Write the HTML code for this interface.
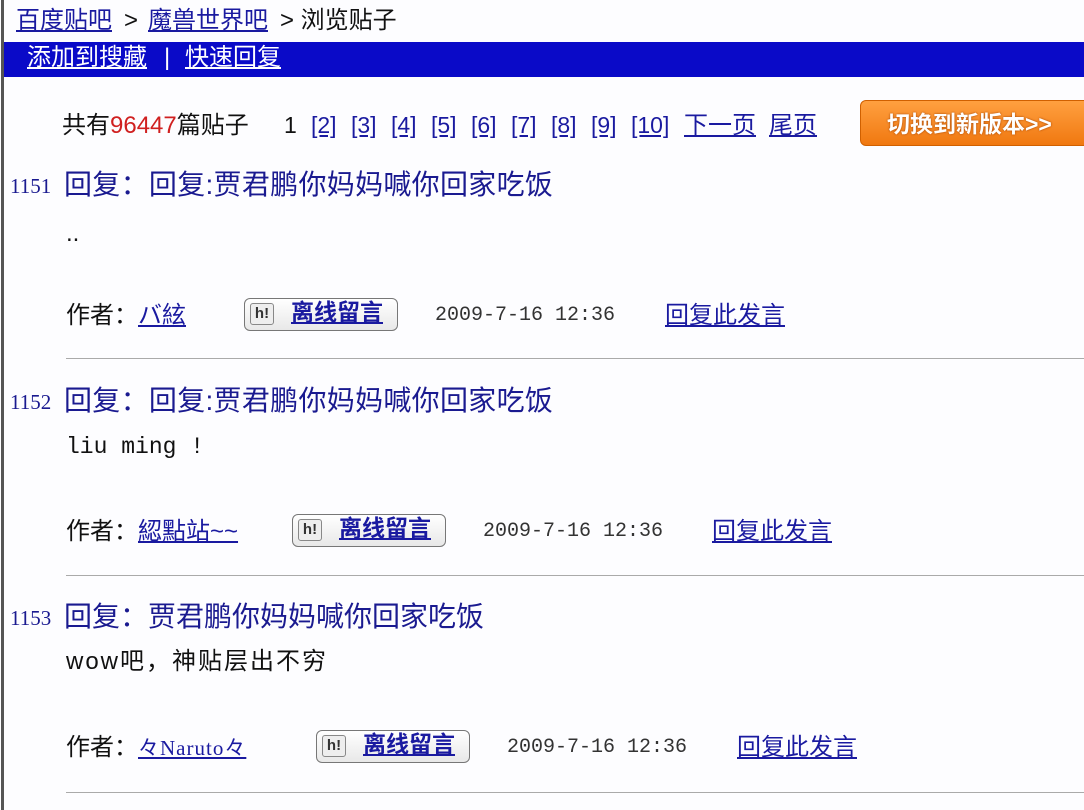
<!DOCTYPE html>
<html><head><meta charset="utf-8"><style>
body{margin:0;width:1084px;height:810px;background:#fdfdff;position:relative;overflow:hidden;font-family:"Liberation Sans","Noto Sans CJK SC",sans-serif;}
.a{position:absolute;white-space:nowrap;line-height:1;}
a,.l{color:#1a1aa0;text-decoration:underline;}
.bar{position:absolute;left:4px;top:42px;width:1080px;height:35px;background:#0a0ac8;}
.lb{position:absolute;left:1px;top:0;width:3px;height:810px;background:#555;}
.t{font-size:28px;color:#1a1a90;}
.n{font-family:"Liberation Serif",serif;font-size:21px;color:#1a1a90;}
.b{font-size:24px;color:#111;}
.d{font-family:"Liberation Mono",monospace;font-size:20px;color:#333;}
.btn{position:absolute;height:31px;width:152px;border:1px solid #777;border-radius:6px;background:linear-gradient(#fff,#e8e8e8);}
.btn .ic{position:absolute;left:5px;top:4px;width:22px;height:20px;border:1px solid #888;border-radius:3px;background:#eee;font:bold 15px "Liberation Sans",sans-serif;color:#333;text-align:center;line-height:20px}
.btn .tx{position:absolute;left:46px;top:2px;line-height:1;font-size:23px;color:#1a1aa0;text-decoration:underline;font-weight:bold}
.hr{position:absolute;left:66px;width:1018px;height:1px;background:#aaa;}
.new{position:absolute;left:860px;top:100px;width:230px;height:46px;border-radius:6px;background:linear-gradient(#ffa040,#f07810);border:1px solid #d06000;color:#fff;font-weight:bold;font-size:23px;line-height:46px;padding-left:26px;box-sizing:border-box;text-shadow:0 0 2px #a04000}
.p{position:absolute;top:114px;font-size:23px;line-height:1;white-space:nowrap}
</style></head><body>
<div class="lb"></div>
<div class="a" style="left:16px;top:9px;font-size:24px;"><a>百度贴吧</a></div>
<div class="a" style="left:124px;top:9px;font-size:24px;color:#111">&gt;</div>
<div class="a" style="left:148px;top:9px;font-size:24px;"><a>魔兽世界吧</a></div>
<div class="a" style="left:280px;top:9px;font-size:24px;color:#111">&gt; 浏览贴子</div>
<div class="bar"></div>
<div class="a" style="left:27px;top:46px;font-size:24px;color:#fff;text-decoration:underline">添加到搜藏</div>
<div class="a" style="left:164px;top:46px;font-size:24px;color:#fff">|</div>
<div class="a" style="left:185px;top:46px;font-size:24px;color:#fff;text-decoration:underline">快速回复</div>
<div class="p" style="left:62px;font-size:24px;color:#111">共有<span style="color:#d02020">96447</span>篇贴子</div>
<div class="p" style="left:284px;color:#111">1</div>
<div class="p" style="left:311px"><a>[2]</a></div>
<div class="p" style="left:351px"><a>[3]</a></div>
<div class="p" style="left:391px"><a>[4]</a></div>
<div class="p" style="left:431px"><a>[5]</a></div>
<div class="p" style="left:471px"><a>[6]</a></div>
<div class="p" style="left:511px"><a>[7]</a></div>
<div class="p" style="left:551px"><a>[8]</a></div>
<div class="p" style="left:591px"><a>[9]</a></div>
<div class="p" style="left:631px"><a>[10]</a></div>
<div class="p" style="left:684px;font-size:24px"><a>下一页</a></div>
<div class="p" style="left:769px;font-size:24px"><a>尾页</a></div>
<div class="new">切换到新版本&gt;&gt;</div>

<div class="a n" style="left:10px;top:176px">1151</div>
<div class="a t" style="left:64px;top:171px;letter-spacing:0.3px">回复：回复:贾君鹏你妈妈喊你回家吃饭</div>
<div class="a b" style="left:66px;top:222px">..</div>
<div class="a b" style="left:66px;top:304px">作者：<a>バ絃</a></div>
<div class="btn" style="left:244px;top:298px"><div class="ic">h!</div><div class="tx">离线留言</div></div>
<div class="a d" style="left:435px;top:306px">2009-7-16 12:36</div>
<div class="a b" style="left:665px;top:304px"><a>回复此发言</a></div>
<div class="hr" style="top:358px"></div>

<div class="a n" style="left:10px;top:392px">1152</div>
<div class="a t" style="left:64px;top:387px;letter-spacing:0.3px">回复：回复:贾君鹏你妈妈喊你回家吃饭</div>
<div class="a" style="left:66px;top:436px;font-family:'Liberation Mono',monospace;font-size:23px;color:#111">liu ming !</div>
<div class="a b" style="left:66px;top:520px">作者：<a>綛點站~~</a></div>
<div class="btn" style="left:292px;top:514px"><div class="ic">h!</div><div class="tx">离线留言</div></div>
<div class="a d" style="left:483px;top:522px">2009-7-16 12:36</div>
<div class="a b" style="left:712px;top:520px"><a>回复此发言</a></div>
<div class="hr" style="top:575px"></div>

<div class="a n" style="left:10px;top:608px">1153</div>
<div class="a t" style="left:64px;top:603px">回复：贾君鹏你妈妈喊你回家吃饭</div>
<div class="a b" style="left:66px;top:650px;letter-spacing:2px">wow吧，神贴层出不穷</div>
<div class="a b" style="left:66px;top:736px">作者：<a style="font-family:'Liberation Serif',serif;font-size:21px;letter-spacing:1px">々Naruto々</a></div>
<div class="btn" style="left:316px;top:730px"><div class="ic">h!</div><div class="tx">离线留言</div></div>
<div class="a d" style="left:507px;top:738px">2009-7-16 12:36</div>
<div class="a b" style="left:737px;top:736px"><a>回复此发言</a></div>
<div class="hr" style="top:792px"></div>
</body></html>
